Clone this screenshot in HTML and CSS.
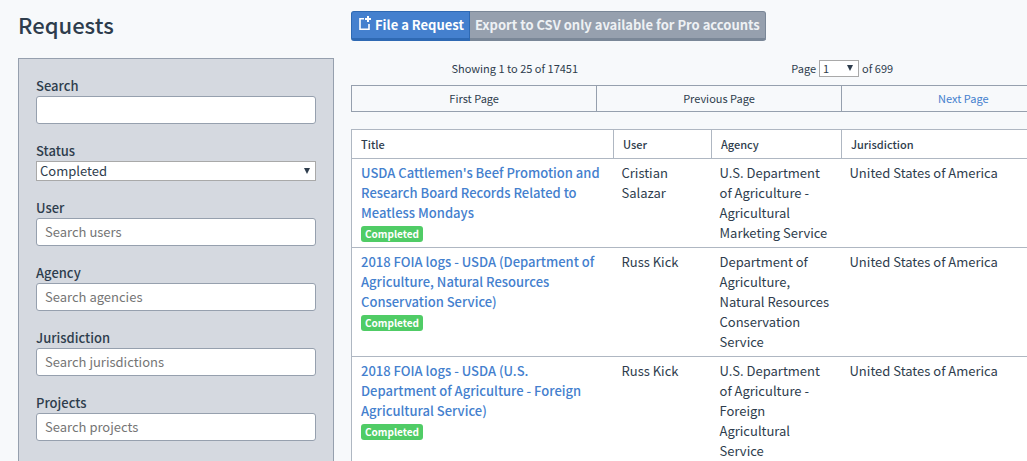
FILE: index.html
```html
<!DOCTYPE html>
<html lang="en">
<head>
<meta charset="utf-8">
<title>Requests</title>
<link rel="stylesheet" href="styles.css">
</head>
<body>
<div class="page">
  <aside class="sidebar">
    <h1 class="heading">Requests</h1>
    <form class="filters">
      <div class="field"><label for="search">Search</label><input id="search" type="text"></div>
      <div class="field"><label for="status">Status</label>
        <div class="select"><select id="status"><option>Completed</option></select></div></div>
      <div class="field"><label for="user">User</label><input id="user" type="text" placeholder="Search users"></div>
      <div class="field"><label for="agency">Agency</label><input id="agency" type="text" placeholder="Search agencies"></div>
      <div class="field"><label for="jurisdiction">Jurisdiction</label><input id="jurisdiction" type="text" placeholder="Search jurisdictions"></div>
      <div class="field"><label for="projects">Projects</label><input id="projects" type="text" placeholder="Search projects"></div>
    </form>
  </aside>
  <main class="results">
    <div class="actions">
      <button class="button primary" type="button"><svg class="icon" viewBox="0 0 12 16" width="12" height="16" aria-hidden="true"><path d="M5 2.8H1V13.2H10V8" fill="none" stroke="currentColor" stroke-width="1.6"/><path d="M9 0V6M6 3H12" fill="none" stroke="currentColor" stroke-width="2"/></svg>File a Request</button><button class="button muted" type="button">Export to CSV only available for Pro accounts</button>
    </div>
    <div class="summary">
      <span>Showing 1 to 25 of 17451</span>
      <div class="pager"><label for="page">Page</label>
        <div class="select small"><select id="page"><option>1</option></select></div><span>of 699</span></div>
    </div>
    <nav class="pages"><span>First Page</span><span>Previous Page</span><span><a href="#">Next Page</a></span></nav>
    <table class="requests">
      <colgroup><col class="col-title"><col class="col-user"><col class="col-agency"><col></colgroup>
      <thead><tr><th>Title</th><th>User</th><th>Agency</th><th>Jurisdiction</th></tr></thead>
      <tbody>
        <tr><td><a class="title" href="#">USDA Cattlemen's Beef Promotion and Research Board Records Related to Meatless Mondays</a><span class="badge">Completed</span></td><td>Cristian Salazar</td><td>U.S. Department of Agriculture - Agricultural Marketing Service</td><td>United States of America</td></tr>
        <tr><td><a class="title" href="#">2018 FOIA logs - USDA (Department of Agriculture, Natural Resources Conservation Service)</a><span class="badge">Completed</span></td><td>Russ Kick</td><td>Department of Agriculture, Natural Resources Conservation Service</td><td>United States of America</td></tr>
        <tr><td><a class="title" href="#">2018 FOIA logs - USDA (U.S. Department of Agriculture - Foreign Agricultural Service)</a><span class="badge">Completed</span></td><td>Russ Kick</td><td>U.S. Department of Agriculture - Foreign Agricultural Service</td><td>United States of America</td></tr>
      </tbody>
    </table>
  </main>
</div>
</body>
</html>
```
FILE: styles.css
```css
* { box-sizing: border-box; }
html { overflow: hidden; }
body {
  margin: 0;
  background: #f7f9fb;
  color: #2e3d4d;
  font: 13px/20px "Noto Sans CJK SC", "Open Sans", sans-serif;
}
a { color: #4480ce; text-decoration: none; }
input, select, button { font: inherit; color: inherit; }
.page {
  display: grid;
  grid-template-columns: 316px minmax(735px, 1fr);
  gap: 17px;
  padding: 8px 0 0 18px;
}
.heading {
  margin: 0 0 18px;
  font-size: 22px;
  line-height: 32px;
  font-weight: 500;
}
.filters {
  display: flex;
  flex-direction: column;
  gap: 17px;
  padding: 17px 17px 34px;
  border: 1px solid #96a0ae;
  background: #d5d9e0;
}
.field { display: flex; flex-direction: column; }
.field label { font-weight: 500; }
.field input {
  height: 28px;
  padding: 0 8px 2px;
  border: 1px solid #96a0ae;
  border-radius: 3px;
  background: #fff;
}
.field input::placeholder { color: #757575; opacity: 1; }
.select { position: relative; display: flex; }
.select::after {
  content: "";
  position: absolute;
  top: 7px;
  right: 6px;
  border: 3px solid transparent;
  border-top: 6px solid #2e3d4d;
  border-bottom: 0;
  pointer-events: none;
}
.select select {
  appearance: none;
  width: 100%;
  height: 20px;
  padding: 0 3px;
  border: 1px solid #a9a9a9;
  border-radius: 0;
  background: #fff;
  line-height: 18px;
}
.actions { display: flex; margin: 3px 0 18px; }
.button {
  display: flex;
  align-items: center;
  height: 30px;
  padding: 0 5px;
  border: 1px solid;
  border-bottom-width: 3px;
  color: #fff;
  font-weight: 700;
  white-space: nowrap;
}
.primary { background: #4480ce; border-color: #2e69b3; border-radius: 3px 0 0 3px; }
.muted { background: #96a0ae; border-color: #7a8797; border-left-width: 0; border-radius: 0 3px 3px 0; color: #eef1f4; }
.icon { margin: 0 4px 2px 2px; }
.summary {
  display: grid;
  grid-template-columns: 1fr 1fr;
  padding-right: 80px;
  margin-bottom: 7px;
  text-align: center;
  font-size: 11px;
  line-height: 19px;
}
.pager { display: flex; justify-content: center; align-items: center; gap: 3px; }
.small select { width: 40px; height: 17px; line-height: 15px; }
.small::after { top: 5px; }
.pages {
  display: grid;
  grid-template-columns: repeat(3, 1fr);
  margin-bottom: 17px;
  border: 1px solid #96a0ae;
  font-size: 11px;
  line-height: 25px;
  text-align: center;
}
.pages span + span { border-left: 1px solid #96a0ae; }
.requests {
  width: 100%;
  table-layout: fixed;
  border-collapse: collapse;
  background: #fff;
  border: 1px solid #afb7c2;
}
.col-title { width: 262px; }
.col-user { width: 98px; }
.col-agency { width: 130px; }
.requests th {
  padding: 4px 9px;
  border: 1px solid #afb7c2;
  font-size: 11px;
  font-weight: 500;
  text-align: left;
}
.requests td {
  padding: 4px 8px;
  border-top: 1px solid #afb7c2;
  vertical-align: top;
}
.requests td:first-child { padding-left: 9px; }
.title { display: block; font-weight: 500; }
.badge {
  display: block;
  width: fit-content;
  margin: 3px 0 1px;
  padding: 0 4px;
  border-radius: 3px;
  background: #50cc66;
  color: #fff;
  font-size: 10px;
  font-weight: 700;
  line-height: 16px;
}
```
